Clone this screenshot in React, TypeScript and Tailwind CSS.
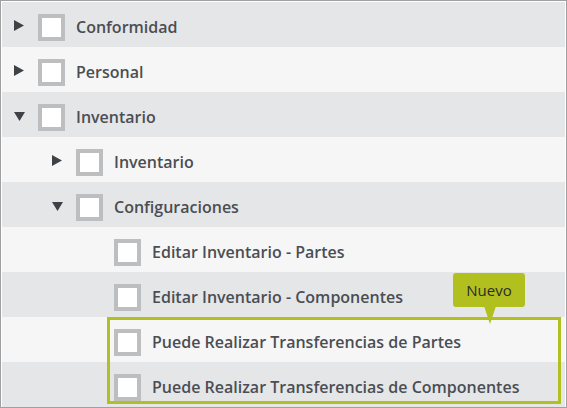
import React from "react";

interface Node {
  label: string;
  level: number;
  toggle?: "closed" | "open";
}

const rows: Node[] = [
  { label: "Conformidad", level: 0, toggle: "closed" },
  { label: "Personal", level: 0, toggle: "closed" },
  { label: "Inventario", level: 0, toggle: "open" },
  { label: "Inventario", level: 1, toggle: "closed" },
  { label: "Configuraciones", level: 1, toggle: "open" },
  { label: "Editar Inventario - Partes", level: 2 },
  { label: "Editar Inventario - Componentes", level: 2 },
];

const newRows: Node[] = [
  { label: "Puede Realizar Transferencias de Partes", level: 2 },
  { label: "Puede Realizar Transferencias de Componentes", level: 2 },
];

const indent = ["pl-[12px]", "pl-[50px]", "pl-[88px]"];

function Arrow({ toggle }: { toggle?: "closed" | "open" }) {
  if (toggle === "closed") {
    return (
      <svg width="10" height="11" viewBox="0 0 10 11" className="mt-[-5px]">
        <polygon points="0,0 10,5.5 0,11" fill="#3e4246" />
      </svg>
    );
  }
  if (toggle === "open") {
    return (
      <svg width="11" height="9" viewBox="0 0 11 9" className="mt-[-3px]">
        <polygon points="0,0 11,0 5.5,9" fill="#3e4246" />
      </svg>
    );
  }
  return null;
}

function Row({ node, index }: { node: Node; index: number }) {
  return (
    <div
      className={`flex h-[45px] items-center pt-[6px] ${indent[node.level]} ${
        index % 2 === 0 ? "bg-[#e5e6e8]" : "bg-[#f6f6f6]"
      }`}
    >
      <div className="flex w-[24px] items-center">
        <Arrow toggle={node.toggle} />
      </div>
      <div className="h-[27px] w-[27px] border-4 border-[#bdbec0] bg-white" />
      <span className="ml-[11px] mt-[-2px] text-[16px] font-semibold text-[#4a4e53]">{node.label}</span>
    </div>
  );
}

export default function App() {
  return (
    <div
      className="h-[408px] w-[567px] border border-[#a0a0a0] bg-white pl-px pr-px pt-px"
      style={{ fontFamily: '"Open Sans", "Liberation Sans", sans-serif' }}
    >
      <div className="flex flex-col">
        {rows.map((node, i) => (
          <Row key={i} node={node} index={i} />
        ))}
        <div className="relative">
          {newRows.map((node, i) => (
            <Row key={i} node={node} index={rows.length + i} />
          ))}
          <div className="pointer-events-none absolute left-[105px] top-0 h-[87px] w-[454px] border-[3px] border-[#b2c01f]" />
          <div className="absolute left-[451px] top-[-44px] flex h-[34px] w-[72px] items-center justify-center rounded-[3px] bg-[#b2c01f] text-[15px] text-[#2b2b2b]">
            Nuevo
          </div>
          <svg
            width="12"
            height="18"
            viewBox="0 0 12 18"
            className="absolute left-[482px] top-[-11px]"
          >
            <polygon points="0,0 12,0 6,18" fill="#b2c01f" />
          </svg>
        </div>
      </div>
    </div>
  );
}
